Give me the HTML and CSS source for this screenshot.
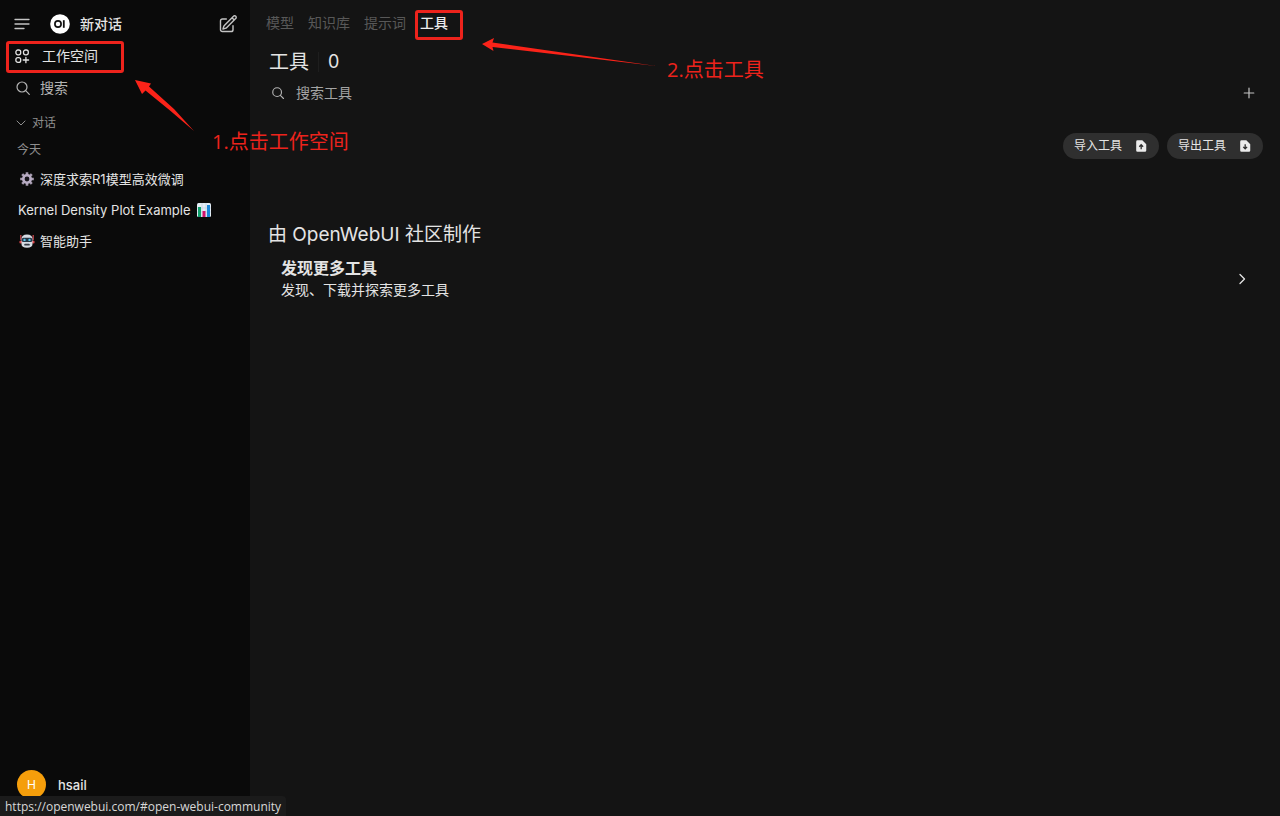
FILE: index.html
```html
<!DOCTYPE html>
<html lang="zh-CN">
<head>
<meta charset="utf-8">
<meta name="viewport" content="width=device-width, initial-scale=1">
<title>Open WebUI</title>
<link rel="stylesheet" href="styles.css">
</head>
<body>
<div class="app">
  <aside class="sidebar">
    <div class="side-top">
      <button class="icon-btn menu-btn" type="button" aria-label="菜单">
        <svg width="16" height="16" viewBox="0 0 16 16" fill="none" stroke="currentColor" stroke-width="1.3" stroke-linecap="round"><path d="M1 3.5h14M1 8h14M1 12.5h9"/></svg>
      </button>
      <a class="new-chat" href="#new">
        <svg class="logo" width="20" height="20" viewBox="0 0 20 20"><circle cx="10" cy="10" r="9.8" fill="#fff"/><circle cx="8" cy="10" r="3.1" fill="none" stroke="#111" stroke-width="1.7"/><path d="M13.8 6.2v7.6" stroke="#111" stroke-width="1.8"/></svg>
        <span>新对话</span>
      </a>
      <button class="icon-btn" type="button" aria-label="编辑">
        <svg width="20" height="20" viewBox="0 0 24 24" fill="none" stroke="currentColor" stroke-width="1.7" stroke-linecap="round" stroke-linejoin="round"><path d="m16.86 4.49 1.69-1.69a1.88 1.88 0 1 1 2.65 2.65L10.58 16.07a4.5 4.5 0 0 1-1.9 1.13L6 18l.8-2.69a4.5 4.5 0 0 1 1.13-1.9l8.93-8.92Zm0 0L19.5 7.13M18 14v4.75A2.25 2.25 0 0 1 15.75 21H5.25A2.25 2.25 0 0 1 3 18.75V8.25A2.25 2.25 0 0 1 5.25 6H10"/></svg>
      </button>
    </div>
    <a class="side-link workspace" href="#workspace">
      <svg width="16" height="16" viewBox="0 0 16 16" fill="none" stroke="currentColor" stroke-width="1.3" stroke-linecap="round"><rect x=".9" y="2" width="4.8" height="4.8" rx="2"/><rect x="8.5" y="2" width="4.8" height="4.8" rx="2"/><rect x=".9" y="9.600" width="4.800" height="4.800" rx="2"/><path d="M10.900 9.300v5.400M8.200 12h5.400"/></svg>
      <span>工作空间</span>
    </a>
    <label class="side-link search">
      <svg width="16" height="16" viewBox="0 0 16 16" fill="none" stroke="currentColor" stroke-width="1.2" stroke-linecap="round"><circle cx="7" cy="7" r="5"/><path d="m10.7 10.7 3.600 3.600"/></svg>
      <input class="field" type="text" placeholder="搜索" aria-label="搜索">
    </label>
    <button class="group" type="button">
      <svg width="10" height="10" viewBox="0 0 10 10" fill="none" stroke="currentColor" stroke-linecap="round" stroke-linejoin="round"><path d="m1 3 4 4 4-4"/></svg>
      <span>对话</span>
    </button>
    <h2 class="day">今天</h2>
    <nav class="chats">
      <a class="chat emoji-first" href="#c1">
        <svg width="16" height="16" viewBox="0 0 16 16"><g stroke="#a79cb0" stroke-width="2.600"><path d="M8 1.200v13.600M1.200 8h13.600M3.200 3.200l9.600 9.600M12.800 3.200l-9.600 9.600"/></g><circle cx="8" cy="8" r="3.700" fill="#17151a" stroke="#b9adc4" stroke-width="2.600"/></svg>
        <span>深度求索R1模型高效微调</span>
      </a>
      <a class="chat" href="#c2">
        <span>Kernel Density Plot Example</span>
        <svg width="14" height="14" viewBox="0 0 14 14"><rect width="14" height="14" rx="1.500" fill="#e3edf5"/><path d="M0 5h14M0 9h14M5 0v14M9 0v14" stroke="#b8cfe0" stroke-width=".6"/><path fill="#10a06c" d="M1 4h3v10H1z"/><path fill="#d5126c" d="M5.500 8h3v6h-3z"/><path fill="#1b86d8" d="M10 2h3v12h-3z"/></svg>
      </a>
      <a class="chat emoji-first" href="#c3">
        <svg width="16" height="16" viewBox="0 0 16 16"><path d="M1.800 2v5M14.200 2v5" stroke="#c6474c" stroke-width="1.300"/><circle cx="1.800" cy="9" r="1.500" fill="#d8474b"/><circle cx="14.200" cy="9" r="1.500" fill="#d8474b"/><path d="M2.500 6q0-4.500 5.500-4.500T13.500 6v5q0 3.800-5.500 3.800T2.500 11z" fill="#d6dbe3"/><rect x="2.800" y="4.800" width="10.400" height="4.200" rx="1.600" fill="#263645"/><circle cx="5.500" cy="6.900" r="1.200" fill="#58c5ec"/><circle cx="10.500" cy="6.900" r="1.200" fill="#58c5ec"/><rect x="5.200" y="10.700" width="5.600" height="1.900" rx=".9" fill="#353b45"/></svg>
        <span>智能助手</span>
      </a>
    </nav>
    <button class="user" type="button"><span class="avatar">H</span><span>hsail</span></button>
  </aside>

  <main class="main">
    <nav class="tabs">
      <a href="#models">模型</a>
      <a href="#knowledge">知识库</a>
      <a href="#prompts">提示词</a>
      <a class="active" href="#tools">工具</a>
    </nav>
    <header class="head"><h1>工具</h1><span class="count">0</span></header>
    <div class="search-row">
      <label class="tool-search">
        <svg width="14" height="14" viewBox="0 0 16 16" fill="none" stroke="currentColor" stroke-width="1.300" stroke-linecap="round"><circle cx="7" cy="7" r="5"/><path d="m10.700 10.700 3.600 3.600"/></svg>
        <input class="field" type="text" placeholder="搜索工具" aria-label="搜索工具">
      </label>
      <button class="icon-btn" type="button" aria-label="新建工具">
        <svg width="12" height="12" viewBox="0 0 12 12" stroke="currentColor" stroke-width="1.200" stroke-linecap="round"><path d="M6 1.200v9.600M1.200 6h9.600"/></svg>
      </button>
    </div>
    <div class="actions">
      <button class="pill" type="button"><span>导入工具</span>
        <svg width="14" height="14" viewBox="0 0 16 16"><path fill="#ececec" d="M4 1.500h5.500l4.500 4.500v7a1.500 1.500 0 0 1-1.500 1.500H4A1.500 1.500 0 0 1 2.500 13V3A1.500 1.500 0 0 1 4 1.500z"/><path d="M8.200 11.800V7M6 8.800l2.200-2.200 2.200 2.200" fill="none" stroke="#2f2f2f" stroke-width="1.500"/></svg>
      </button>
      <button class="pill" type="button"><span>导出工具</span>
        <svg width="14" height="14" viewBox="0 0 16 16"><path fill="#ececec" d="M4 1.500h5.500l4.500 4.500v7a1.500 1.500 0 0 1-1.500 1.500H4A1.500 1.500 0 0 1 2.500 13V3A1.500 1.500 0 0 1 4 1.500z"/><path d="M8.200 6v4.800M6 9l2.200 2.200L10.400 9" fill="none" stroke="#2f2f2f" stroke-width="1.500"/></svg>
      </button>
    </div>
    <section class="community">
      <h2>由 OpenWebUI 社区制作</h2>
      <a class="discover" href="https://openwebui.com/#open-webui-community">
        <span class="discover-text"><strong>发现更多工具</strong><span>发现、下载并探索更多工具</span></span>
        <svg width="12" height="12" viewBox="0 0 12 12" fill="none" stroke="currentColor" stroke-width="1.300" stroke-linecap="round" stroke-linejoin="round"><path d="m4 1.500 4.500 4.500L4 10.500"/></svg>
      </a>
    </section>
  </main>

  <div class="status">https://openwebui.com/#open-webui-community</div>

  <div class="mark box-workspace"></div>
  <div class="mark box-tools"></div>
  <svg class="arrow arrow-one" width="62" height="54" viewBox="0 0 62 54"><path fill="#fb2319" d="M1 1 17 4.500 15 7.500 40 30 60 52 36 31.500 11.500 11.500 8 15z"/></svg>
  <svg class="arrow arrow-two" width="176" height="30" viewBox="0 0 176 30"><path fill="#fb2319" d="M1 6 13 0l-1.500 4.500L175 28 11.500 9 12.500 13z"/></svg>
  <p class="note note-one">1.点击工作空间</p>
  <p class="note note-two">2.点击工具</p>
</div>
</body>
</html>
```
FILE: styles.css
```css
* { box-sizing: border-box; }

body {
  margin: 0;
  background: #141414;
  color: #e4e4e4;
  font: 14px/20px Inter, "Noto Sans CJK SC", sans-serif;
}

h1, h2, p { margin: 0; font-weight: 400; }
a { color: inherit; text-decoration: none; }
button { border: 0; padding: 0; background: none; color: inherit; font: inherit; cursor: pointer; }
svg { display: block; flex: none; }

.app {
  position: relative;
  display: flex;
  min-height: 100vh;
}

.sidebar {
  display: flex;
  flex-direction: column;
  flex: none;
  width: 250px;
  padding: 8px 12px 17px;
  background: #0a0a0a;
}

.side-top { display: flex; align-items: center; height: 32px; }
.icon-btn { display: flex; align-items: center; justify-content: center; color: #c4c4c4; }
.menu-btn { width: 20px; height: 20px; }
.new-chat { display: flex; flex: 1; align-items: center; gap: 10px; padding-left: 18px; font-weight: 500; }

.side-link { display: flex; align-items: center; height: 32px; padding-left: 3px; }
.workspace { gap: 11px; }
.search { gap: 9px; color: #b4b4b4; }

.field {
  flex: 1;
  min-width: 0;
  border: 0;
  padding: 0;
  outline: 0;
  background: none;
  color: inherit;
  font: inherit;
}
.field::placeholder { color: #b4b4b4; opacity: 1; }

.group {
  display: flex;
  align-items: center;
  gap: 6px;
  height: 26px;
  margin-top: 6px;
  padding-left: 4px;
  color: #8e8e8e;
  font-size: 12px;
}
.day { padding: 4px 5px 0; color: #8e8e8e; font-size: 12px; line-height: 20px; }

.chats { padding-top: 3px; font-size: 13px; }
.chat { display: flex; align-items: center; gap: 6px; height: 31px; padding-left: 6px; }
.emoji-first { gap: 5px; padding-left: 7px; }

.user {
  display: flex;
  align-items: center;
  gap: 12px;
  margin-top: auto;
  padding-left: 5px;
  font-size: 13px;
  font-weight: 500;
}
.avatar {
  width: 29px;
  height: 29px;
  border-radius: 50%;
  background: #f59e0b;
  color: #fff;
  font-size: 12px;
  font-weight: 400;
  line-height: 29px;
  text-align: center;
}

.main { flex: 1; min-width: 0; padding: 13px 16px 0; }
.tabs { display: flex; gap: 14px; color: #585858; }
.active { color: #ececec; font-weight: 500; }

.head { display: flex; align-items: center; height: 28px; margin-top: 15px; padding-left: 3px; }
.head h1 { font-size: 20px; font-weight: 400; }
.count {
  margin-left: 9px;
  padding-left: 9px;
  border-left: 1px solid #1e1e1e;
  font-size: 18px;
}

.search-row { display: flex; align-items: center; height: 34px; padding-right: 9px; }
.tool-search { display: flex; flex: 1; align-items: center; gap: 11px; padding-left: 5px; color: #b4b4b4; }
.tool-search .field::placeholder { color: #a4a4a4; }

.actions { display: flex; justify-content: flex-end; gap: 8px; padding: 23px 1px 0 0; }
.pill {
  display: flex;
  align-items: center;
  gap: 12px;
  height: 26px;
  padding: 0 11px;
  border-radius: 13px;
  background: #2f2f2f;
  font-size: 12px;
}

.community { padding: 62px 2px 0; }
.community h2 { font-size: 19px; line-height: 28px; }
.discover { display: flex; align-items: center; justify-content: space-between; padding: 9px 14px 0 13px; }
.discover-text { display: flex; flex-direction: column; gap: 2px; }
.discover strong { font-size: 16px; font-weight: 700; }

.status {
  position: absolute;
  left: 0;
  bottom: 0;
  height: 20px;
  padding: 0 5px;
  border-top-right-radius: 4px;
  background: #1b1b1b;
  color: #d8d8d8;
  font: 12px/21px "Open Sans", sans-serif;
}

.mark { position: absolute; border: 3px solid #ed231c; border-radius: 3px; }
.box-workspace { left: 6px; top: 41px; width: 118px; height: 32px; }
.box-tools { left: 415px; top: 10px; width: 48px; height: 30px; }
.arrow { position: absolute; }
.arrow-one { left: 134px; top: 79px; }
.arrow-two { left: 481px; top: 38px; }
.note { position: absolute; color: #ed231c; font: 20px/28px "Open Sans", "Noto Sans CJK SC", sans-serif; white-space: nowrap; }
.note-one { left: 212px; top: 128px; }
.note-two { left: 667px; top: 56px; }
```
